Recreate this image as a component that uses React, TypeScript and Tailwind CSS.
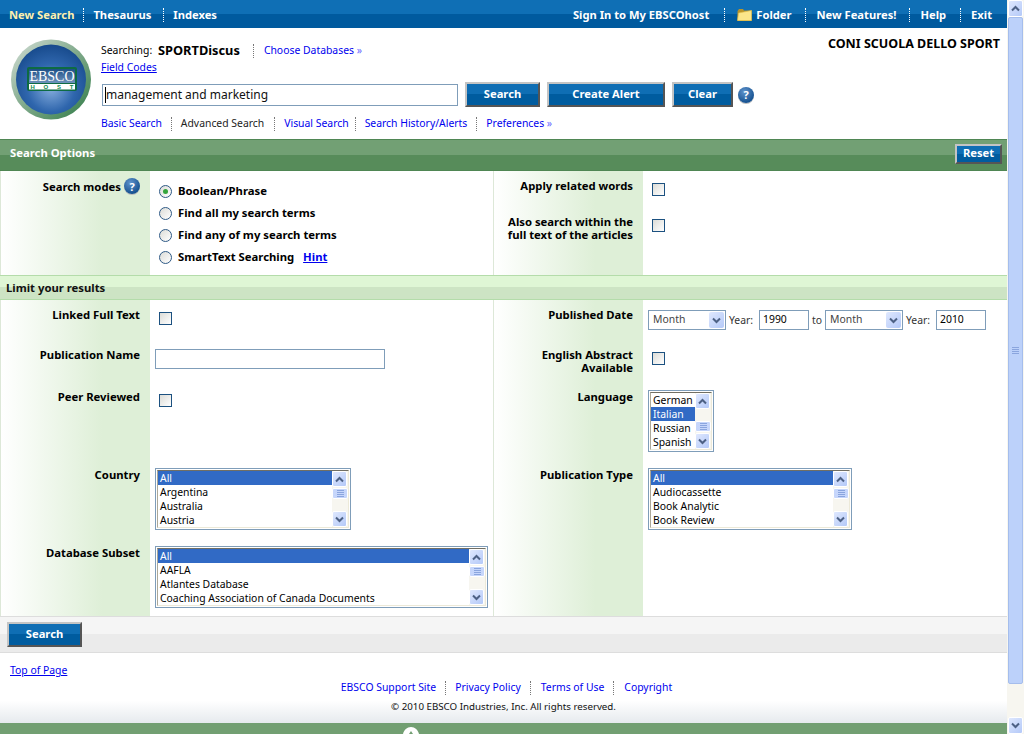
import React from "react";

const labelCol = "bg-[linear-gradient(90deg,#ffffff,#deefd7_68%)] text-right pr-[10px] font-bold text-[11.3px] leading-[13px] text-black";
const blueBtn = "flex items-center justify-center border-2 border-t-[#c4c4c4] border-l-[#c4c4c4] border-r-[#555555] border-b-[#555555] bg-[linear-gradient(#0f6eb4_50%,#005c9f_50%)] text-white font-bold text-[11.2px]";

function Sep({ light }: { light?: boolean }) {
  return <span className={light ? "h-[14px] border-l border-dotted border-white" : "h-[14px] border-l border-dotted border-[#777777]"} />;
}

function Help() {
  return (
    <span className="flex h-[16px] w-[16px] items-center justify-center rounded-full bg-[radial-gradient(circle_at_40%_30%,#5f93cc,#14508f_75%)] text-[11px] font-bold leading-none text-white shadow-[0_1px_0_#bbbbbb]">
      ?
    </span>
  );
}

function Folder() {
  return (
    <svg width="15" height="14" viewBox="0 0 15 14">
      <path d="M0.5 3 L0.5 13 L14.5 13 L14.5 2.5 L7 2.5 L6 1 L2 1 Z" fill="#b8932a" />
      <path d="M0.5 12.5 L1.5 5 L14.5 2.5 L14.5 12.5 Z" fill="#fbe58a" stroke="#e2c04c" strokeWidth="0.6" />
    </svg>
  );
}

function Logo() {
  return (
    <svg width="80" height="81" viewBox="0 0 80 81">
      <defs>
        <linearGradient id="rim" x1="0" y1="0" x2="1" y2="1">
          <stop offset="0" stopColor="#d5dfd8" />
          <stop offset="0.5" stopColor="#7fa98a" />
          <stop offset="1" stopColor="#2f7a45" />
        </linearGradient>
        <radialGradient id="ball" cx="0.5" cy="0.62" r="0.62">
          <stop offset="0" stopColor="#86aede" />
          <stop offset="0.55" stopColor="#2f66ad" />
          <stop offset="1" stopColor="#174a8c" />
        </radialGradient>
        <linearGradient id="badge" x1="0" y1="0" x2="0" y2="1">
          <stop offset="0" stopColor="#1c4f86" />
          <stop offset="1" stopColor="#6f93bb" />
        </linearGradient>
      </defs>
      <circle cx="40" cy="40.5" r="40" fill="url(#rim)" />
      <circle cx="40" cy="40.5" r="35" fill="url(#ball)" />
      <rect x="16" y="28" width="50" height="24" rx="2" fill="#0d6b43" />
      <rect x="18" y="30" width="46" height="14" fill="url(#badge)" />
      <text x="41" y="42" textAnchor="middle" fontFamily="'Liberation Serif', serif" fontSize="15" fill="#ffffff" textLength="45" lengthAdjust="spacingAndGlyphs">EBSCO</text>
      <rect x="18" y="45" width="46" height="5.5" fill="#ffffff" />
      <text x="41" y="50" textAnchor="middle" fontFamily="'Liberation Sans', sans-serif" fontWeight="bold" fontSize="6" fill="#0d8a4a" textLength="43">HOST</text>
    </svg>
  );
}

function Chevron({ up, color = "#4d6185" }: { up?: boolean; color?: string }) {
  return (
    <svg width="9" height="7" viewBox="0 0 9 7">
      <polyline points={up ? "1,5.5 4.5,2 8,5.5" : "1,1.5 4.5,5 8,1.5"} fill="none" stroke={color} strokeWidth="2" />
    </svg>
  );
}

function ScrollBtn({ up, w = "w-[15px]", h = "h-[16px]" }: { up?: boolean; w?: string; h?: string }) {
  return (
    <span className={`flex shrink-0 items-center justify-center rounded-[2px] border border-white bg-[linear-gradient(135deg,#dfe8fe,#b4c9f8)] ${w} ${h}`}>
      <Chevron up={up} />
    </span>
  );
}

function Grip() {
  return (
    <span className="flex flex-col gap-[1px]">
      <span className="h-px w-[7px] bg-[#8aa5de]" />
      <span className="h-px w-[7px] bg-[#8aa5de]" />
      <span className="h-px w-[7px] bg-[#8aa5de]" />
      <span className="h-px w-[7px] bg-[#8aa5de]" />
    </span>
  );
}

function ListBox({ items, selected, width, thumbTop }: { items: string[]; selected: number; width: string; thumbTop: string }) {
  return (
    <div className={`flex h-[62px] border border-[#7f9db9] bg-white p-px ${width}`}>
      <div className="flex min-w-0 flex-1 border border-[#ece9d8] border-t-[#716f64] border-l-[#aca899]">
        <div className="min-w-0 flex-1">
          {items.map((item, i) => (
            <div
              key={item}
              className={i === selected ? "h-[14px] bg-[#316ac5] pl-[2px] text-[10.4px] leading-[14px] text-white" : "h-[14px] pl-[2px] text-[10.4px] leading-[14px] text-black"}
            >
              {item}
            </div>
          ))}
        </div>
        <div className="relative flex w-[16px] shrink-0 flex-col justify-between bg-[#f7f6f0]">
          <ScrollBtn up />
          <span className={`absolute left-0 flex h-[11px] w-[16px] items-center justify-center rounded-[2px] border border-white bg-[#c6d6fb] ${thumbTop}`}>
            <Grip />
          </span>
          <ScrollBtn />
        </div>
      </div>
    </div>
  );
}

function Check({ className = "" }: { className?: string }) {
  return <span className={`block h-[13px] w-[13px] border border-[#1c5180] bg-[linear-gradient(135deg,#dcdcd7,#ffffff)] ${className}`} />;
}

function Radio({ on, children }: { on?: boolean; children: React.ReactNode }) {
  return (
    <div className="flex h-[22px] items-center">
      <span className="ml-[9px] mr-[6px] flex h-[13px] w-[13px] items-center justify-center rounded-full border border-[#2f5a86] bg-[linear-gradient(135deg,#dcdcd7,#ffffff)]">
        {on && <span className="h-[5px] w-[5px] rounded-full bg-[#35a53c]" />}
      </span>
      <span className="text-[11.3px] font-bold text-black">{children}</span>
    </div>
  );
}

function MonthSelect() {
  return (
    <div className="flex h-[20px] w-[78px] items-center justify-between border border-[#7f9db9] bg-white pl-[4px] pr-px text-[10.4px] text-[#444444]">
      Month
      <span className="flex h-[16px] w-[15px] items-center justify-center rounded-[2px] bg-[linear-gradient(135deg,#dfe8fe,#b4c9f8)]">
        <Chevron />
      </span>
    </div>
  );
}

function YearBox({ value }: { value: string }) {
  return <div className="flex h-[20px] w-[50px] items-center border border-[#7f9db9] bg-white pl-[3px] text-[10.4px] text-black">{value}</div>;
}

export default function App() {
  return (
    <div className="flex h-[734px] w-[1024px] overflow-hidden bg-white font-['Noto_Sans',sans-serif] text-[10.4px] text-black">
      <div className="flex w-[1007px] shrink-0 flex-col">
        {/* top nav */}
        <div className="flex h-[28px] items-center justify-between bg-[linear-gradient(#0f6fb5_50%,#005a9e_50%)] pl-[9px] pr-[15px] pt-[2px] text-[11.2px] font-bold text-white">
          <div className="flex items-center gap-[9px]">
            <span className="text-[#fdf0b0]">New Search</span>
            <Sep light />
            <span className="mr-[3px]">Thesaurus</span>
            <Sep light />
            <span>Indexes</span>
          </div>
          <div className="flex items-center gap-[10px]">
            <span className="mr-[5px]">Sign In to My EBSCOhost</span>
            <Sep light />
            <span className="ml-[2px] flex items-center gap-[4px]">
              <Folder />
              Folder
            </span>
            <span className="ml-[4px] flex"><Sep light /></span>
            <span>New Features!</span>
            <span className="ml-[3px] flex"><Sep light /></span>
            <span>Help</span>
            <span className="ml-[4px] flex"><Sep light /></span>
            <span>Exit</span>
          </div>
        </div>

        {/* header */}
        <div className="flex h-[111px] pl-[11px] pr-[7px] pt-[11px]">
          <Logo />
          <div className="ml-[10px] flex-1 pt-px">
            <div className="flex h-[22px] items-center">
              <span className="w-[57px]">Searching:</span>
              <span className="text-[12.8px] font-bold">SPORTDiscus</span>
              <span className="ml-[13px] mr-[10px] flex"><Sep /></span>
              <span className="text-[#0000ee]">Choose Databases <span className="text-[#6a6aff]">»</span></span>
            </div>
            <div className="flex h-[12px] items-center text-[#0000ee] underline">Field Codes</div>
            <div className="mt-[8px] flex items-center">
              <div className="ml-px flex h-[22px] w-[356px] items-center border border-[#7f9db9] pl-[2px] text-[12px] text-[#111111]">
                <span className="h-[16px] w-px bg-black" />
                management and marketing
              </div>
              <button className={`${blueBtn} ml-[7px] h-[25px] w-[75px]`}>Search</button>
              <button className={`${blueBtn} ml-[7px] h-[25px] w-[118px]`}>Create Alert</button>
              <button className={`${blueBtn} ml-[7px] h-[25px] w-[61px]`}>Clear</button>
              <span className="ml-[5px]"><Help /></span>
            </div>
            <div className="mt-[10px] flex h-[14px] items-center gap-[9px] text-[#0000ee]">
              <span>Basic Search</span>
              <Sep />
              <span className="mr-px text-[#222222]">Advanced Search</span>
              <Sep />
              <span className="-mr-[3px]">Visual Search</span>
              <Sep />
              <span>Search History/Alerts</span>
              <Sep />
              <span>Preferences <span className="text-[#6a6aff]">»</span></span>
            </div>
          </div>
          <div className="text-[12.5px] font-bold leading-[10px]">CONI SCUOLA DELLO SPORT</div>
        </div>

        {/* search options bar */}
        <div className="flex h-[32px] items-center justify-between border-t border-b border-[#4f8653] bg-[linear-gradient(#72a074_50%,#578c5a_50%)] pl-[10px] pr-[5px] text-[11.3px] font-bold text-white">
          <span className="-mt-[4px]">Search Options</span>
          <button className={`${blueBtn} -mt-[3px] h-[20px] w-[47px]`}>Reset</button>
        </div>

        {/* search modes */}
        <div className="grid h-[104px] grid-cols-[149px_344px_149px_1fr] border-l border-[#dde8d8]">
          <div className={`${labelCol} pt-[7px]`}>
            <span className="inline-flex items-center gap-[3px]">
              Search modes
              <Help />
            </span>
          </div>
          <div className="border-r border-[#dde8d8] pt-[9px]">
            <Radio on>Boolean/Phrase</Radio>
            <Radio>Find all my search terms</Radio>
            <Radio>Find any of my search terms</Radio>
            <Radio>
              SmartText Searching <span className="ml-[6px] text-[#0000ee] underline">Hint</span>
            </Radio>
          </div>
          <div className={`${labelCol} pt-[8px]`}>
            <div className="h-[36px]">Apply related words</div>
            <div>
              Also search within the
              <br />
              full text of the articles
            </div>
          </div>
          <div className="pl-[9px] pt-[12px]">
            <Check className="mb-[23px]" />
            <Check />
          </div>
        </div>

        {/* limit bar */}
        <div className="flex h-[25px] items-center border-y border-[#b4dcaa] bg-[linear-gradient(#dff6d5_50%,#cde4c4_50%)] pl-[6px] pt-px text-[11.3px] font-bold text-[#111111]">
          Limit your results
        </div>

        {/* limiters */}
        <div className="grid h-[316px] grid-cols-[149px_344px_149px_1fr] grid-rows-[42px_42px_78px_78px_76px] border-l border-[#dde8d8]">
          <div className={`${labelCol} pt-[8px]`}>Linked Full Text</div>
          <div className="border-r border-[#dde8d8] pl-[9px] pt-[12px]"><Check /></div>
          <div className={`${labelCol} pt-[8px]`}>Published Date</div>
          <div className="flex items-start gap-[3px] pl-[5px] pt-[10px] text-[10.4px] text-[#333333]">
            <MonthSelect />
            <span className="mt-[3px] w-[27px]">Year:</span>
            <YearBox value="1990" />
            <span className="mt-[3px] w-[10px]">to</span>
            <MonthSelect />
            <span className="mt-[3px] w-[27px]">Year:</span>
            <YearBox value="2010" />
          </div>

          <div className={`${labelCol} pt-[6px]`}>Publication Name</div>
          <div className="border-r border-[#dde8d8] pl-[5px] pt-[7px]">
            <div className="h-[20px] w-[230px] border border-[#7f9db9] bg-white" />
          </div>
          <div className={`${labelCol} pt-[6px]`}>
            English Abstract
            <br />
            Available
          </div>
          <div className="pl-[9px] pt-[10px]"><Check /></div>

          <div className={`${labelCol} pt-[6px]`}>Peer Reviewed</div>
          <div className="border-r border-[#dde8d8] pl-[9px] pt-[10px]"><Check /></div>
          <div className={`${labelCol} pt-[6px]`}>Language</div>
          <div className="pl-[5px] pt-[6px]">
            <ListBox items={["German", "Italian", "Russian", "Spanish"]} selected={1} width="w-[66px]" thumbTop="top-[28px]" />
          </div>

          <div className={`${labelCol} pt-[6px]`}>Country</div>
          <div className="border-r border-[#dde8d8] pl-[5px] pt-[6px]">
            <ListBox items={["All", "Argentina", "Australia", "Austria"]} selected={0} width="w-[196px]" thumbTop="top-[17px]" />
          </div>
          <div className={`${labelCol} pt-[6px]`}>Publication Type</div>
          <div className="pl-[5px] pt-[6px]">
            <ListBox items={["All", "Audiocassette", "Book Analytic", "Book Review"]} selected={0} width="w-[204px]" thumbTop="top-[17px]" />
          </div>

          <div className={`${labelCol} pt-[6px]`}>Database Subset</div>
          <div className="border-r border-[#dde8d8] pl-[5px] pt-[6px]">
            <ListBox items={["All", "AAFLA", "Atlantes Database", "Coaching Association of Canada Documents"]} selected={0} width="w-[333px]" thumbTop="top-[17px]" />
          </div>
          <div className={labelCol} />
          <div />
        </div>

        {/* bottom search bar */}
        <div className="flex h-[37px] items-center border-y border-[#dddddd] bg-[linear-gradient(#f5f5f5_50%,#ebebeb_50%)] pl-[7px]">
          <button className={`${blueBtn} h-[25px] w-[75px]`}>Search</button>
        </div>

        {/* footer */}
        <div className="flex h-[70px] flex-col bg-[linear-gradient(#ffffff_68%,#e6eaee)]">
          <div className="mt-[10px] h-[14px] pl-[10px] leading-[14px] text-[#0000ee] underline">Top of Page</div>
          <div className="mt-[4px] flex h-[14px] items-center justify-center gap-[9px] pl-[6px] text-[#0000ee]">
            <span>EBSCO Support Site</span>
            <Sep />
            <span>Privacy Policy</span>
            <Sep />
            <span className="ml-px">Terms of Use</span>
            <Sep />
            <span className="ml-px">Copyright</span>
          </div>
          <div className="mt-[5px] text-center text-[9.75px] leading-[14px] text-[#111111]">© 2010 EBSCO Industries, Inc. All rights reserved.</div>
        </div>
        <div className="flex h-[11px] justify-center bg-[#729f72] pr-[186px]">
          <svg width="16" height="7" viewBox="0 0 16 7" className="mt-[4px]">
            <path d="M8 0 C12 0 15 3 16 7 L10 7 L8 4 L6 7 L0 7 C1 3 4 0 8 0 Z" fill="#ffffff" />
          </svg>
        </div>
      </div>

      {/* page scrollbar */}
      <div className="flex w-[17px] shrink-0 flex-col bg-[#f7f6f0] px-px">
        <ScrollBtn up h="h-[17px]" />
        <span className="flex h-[667px] w-[15px] shrink-0 items-center justify-center rounded-[2px] border border-[#a5bdec] bg-[#bcd1fa]">
          <Grip />
        </span>
        <span className="flex-1" />
        <ScrollBtn h="h-[17px]" />
      </div>
    </div>
  );
}
